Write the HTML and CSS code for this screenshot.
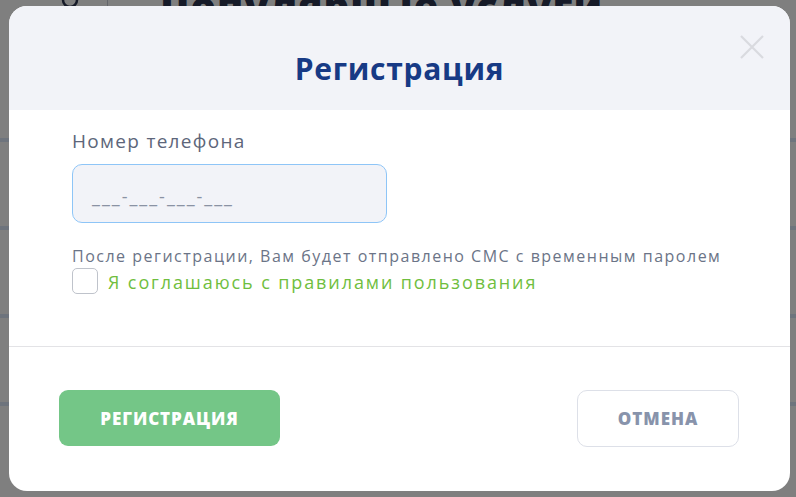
FILE: index.html
```html
<!DOCTYPE html>
<html lang="ru">
<head>
<meta charset="utf-8">
<title>Регистрация</title>
<link rel="stylesheet" href="styles.css">
</head>
<body>
<div class="page">
  <div class="page-top">
    <svg class="page-search" width="22" height="22" viewBox="0 0 22 22"><circle cx="10" cy="10" r="7" fill="none" stroke="#2c3550" stroke-width="2.5"/></svg>
    <span class="page-sep"></span>
    <h1 class="page-title">Популярные услуги</h1>
  </div>
  <div class="page-rows">
    <div class="page-row"></div>
    <div class="page-row"></div>
    <div class="page-row"></div>
    <div class="page-row"></div>
  </div>
</div>
<div class="overlay">
  <div class="modal">
    <div class="modal-head">
      <h2 class="modal-title">Регистрация</h2>
      <button class="modal-close" aria-label="Закрыть">
        <svg width="24" height="24" viewBox="0 0 24 24"><path d="M1 1L23 23M23 1L1 23" stroke="#d9dadf" stroke-width="2.2" fill="none"/></svg>
      </button>
    </div>
    <div class="modal-body">
      <label class="field-label">Номер телефона</label>
      <div class="phone-input"><span class="placeholder">___-___-___-___</span></div>
      <p class="hint">После регистрации, Вам будет отправлено СМС с временным паролем</p>
      <label class="agree">
        <span class="checkbox"></span>
        <span class="agree-text">Я соглашаюсь с правилами пользования</span>
      </label>
    </div>
    <div class="modal-foot">
      <button class="btn btn-primary">РЕГИСТРАЦИЯ</button>
      <button class="btn btn-cancel">ОТМЕНА</button>
    </div>
  </div>
</div>
</body>
</html>
```
FILE: styles.css
```css
* { box-sizing: border-box; }
html, body { margin: 0; padding: 0; }
body {
  width: 796px;
  height: 497px;
  overflow: hidden;
  background: #ffffff;
  font-family: "Open Sans", "Noto Sans", sans-serif;
  position: relative;
}
.page { height: 497px; }
.page-top {
  display: flex;
  align-items: center;
  height: 20px;
  margin-top: -10px;
  padding-left: 60px;
}
.page-search { margin-top: 2px; }
.page-sep { width: 1px; height: 20px; background: #c8ccd6; margin-left: 25px; }
.page-title {
  margin: 0 0 0 52px;
  font-size: 40px;
  font-weight: 800;
  color: #2c3550;
  line-height: 20px;
  padding-top: 12px;
  letter-spacing: 1px;
}
.page-rows { margin-top: 128px; }
.page-row {
  height: 88px;
  border-top: 4px solid #dde8fa;
}
.overlay {
  position: absolute;
  inset: 0;
  background: rgba(0, 0, 0, 0.5);
  padding: 6px 6px 6px 9px;
}
.modal {
  width: 781px;
  height: 485px;
  background: #ffffff;
  border-radius: 18px;
  overflow: hidden;
  display: flex;
  flex-direction: column;
}
.modal-head {
  position: relative;
  height: 104px;
  background: #f2f3f8;
  padding-top: 44px;
  text-align: center;
}
.modal-title {
  margin: 0;
  font-size: 30px;
  line-height: 38px;
  font-weight: 700;
  color: #173a85;
  letter-spacing: 0.7px;
}
.modal-close {
  position: absolute;
  top: 29px;
  right: 26px;
  width: 24px;
  height: 24px;
  padding: 0;
  border: 0;
  background: none;
}
.modal-body {
  padding: 18px 63px 0;
  height: 237px;
  border-bottom: 1px solid #e3e3e6;
}
.field-label {
  display: block;
  font-size: 19px;
  line-height: 26px;
  color: #5d667a;
  letter-spacing: 1.3px;
}
.phone-input {
  margin-top: 10px;
  width: 315px;
  height: 59px;
  border: 1px solid #8ec5f7;
  border-radius: 10px;
  background: #f2f3f8;
  padding-left: 19px;
  display: flex;
  align-items: center;
}
.placeholder {
  font-size: 18px;
  color: #8a92a3;
  padding-top: 4px;
  letter-spacing: 2px;
}
.hint {
  margin: 23px 0 0;
  font-size: 16px;
  line-height: 20px;
  color: #6b7487;
  letter-spacing: 1.5px;
  white-space: nowrap;
}
.agree {
  display: flex;
  align-items: center;
  gap: 10px;
}
.checkbox {
  flex: none;
  width: 26px;
  height: 26px;
  border: 1px solid #bfc3cb;
  border-radius: 5px;
  background: #fff;
}
.agree-text {
  font-size: 18px;
  color: #6fbe3e;
  line-height: 26px;
  letter-spacing: 1.9px;
  padding-top: 3px;
}
.modal-foot {
  flex: 1;
  display: flex;
  justify-content: space-between;
  align-items: flex-start;
  padding: 43px 51px 0 50px;
}
.btn {
  font-family: "Open Sans", "Noto Sans", sans-serif;
  font-weight: 800;
  font-size: 17px;
  cursor: pointer;
}
.btn-primary {
  width: 221px;
  height: 56px;
  border: 0;
  border-radius: 9px;
  background: #74c687;
  color: #ffffff;
  letter-spacing: 0.9px;
}
.btn-cancel {
  width: 162px;
  height: 57px;
  border: 1px solid #dde0e8;
  border-radius: 10px;
  background: #ffffff;
  color: #8893ab;
  letter-spacing: 1px;
}
```
